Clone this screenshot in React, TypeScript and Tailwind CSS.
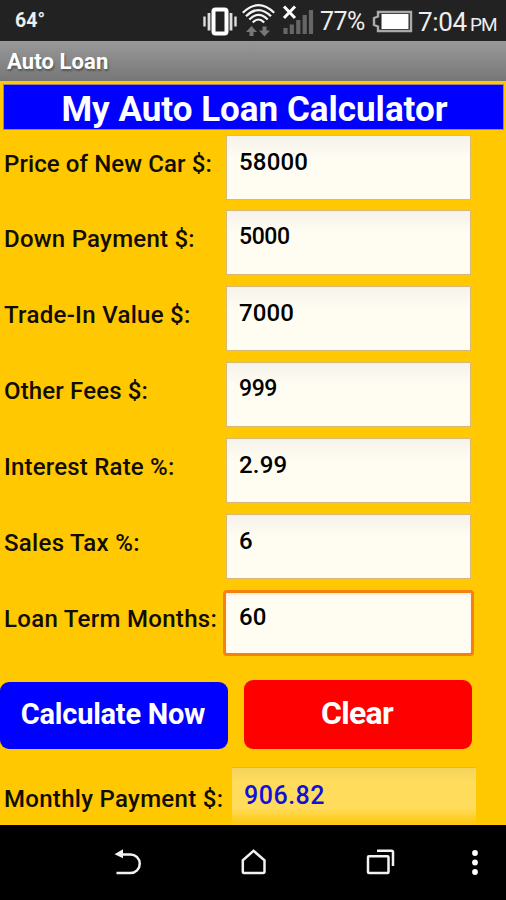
const fields = [
  { label: "Price of New Car $:", value: "58000", h: "h-[75px]", ls: "tracking-[0.1px]", vs: "pb-[12px] text-[24px] tracking-[0.2px]" },
  { label: "Down Payment $:", value: "5000", h: "h-[76px]", ls: "tracking-[0.25px]", vs: "pb-[12px] text-[23px] tracking-[-0.4px]" },
  { label: "Trade-In Value $:", value: "7000", h: "h-[76px]", ls: "tracking-[0.3px]", vs: "pb-[12px] text-[24px] tracking-[0.1px]" },
  { label: "Other Fees $:", value: "999", h: "h-[76px]", ls: "tracking-[0.15px]", vs: "pb-[12px] text-[23px] tracking-[-0.4px]" },
  { label: "Interest Rate %:", value: "2.99", h: "h-[76px]", ls: "tracking-[0.2px]", vs: "pb-[12px] text-[24px] tracking-[0.2px]" },
  { label: "Sales Tax %:", value: "6", h: "h-[76px]", ls: "tracking-[0.3px]", vs: "pb-[12px] text-[24px]" },
  { label: "Loan Term Months:", value: "60", h: "h-[76px]", ls: "tracking-[0.3px]", vs: "text-[24px]", focused: true },
];

function StatusBar() {
  return (
    <header className="flex h-[41px] w-full shrink-0 bg-[#222222] text-[#eeeeee]">
      <span className="w-[203px] pl-[15px] pt-[9px] text-[19.5px] leading-[24px] font-bold">64°</span>
      <svg className="h-[41px] w-[117px] shrink-0" viewBox="203 0 117 41" fill="none">
        <rect x="213.500" y="9.500" width="13" height="24" rx="2" stroke="#fff" strokeWidth="4" />
        <path d="M209 13v17.500M231 13v17.500" stroke="#ddd" strokeWidth="2.800" />
        <path d="M204.500 16.500v10M235.500 16.500v10" stroke="#ddd" strokeWidth="2.400" />
        <path d="M242.800 12.800Q258.500-2.500 274.200 12.800M246 16.300Q258.500 3.800 271 16.300M249.300 19.500Q258.500 10.200 267.700 19.500M252.800 22.500Q258.500 16.500 264.200 22.500" stroke="#f4f4f4" strokeWidth="2.200" />
        <path d="M251.500 26l5.500 6h-3.500v4h-4v-4H246zM264.500 36.500l-5.500-6h3.500v-4h4v4h3.500z" fill="#777" />
        <path d="M284 6.500l11 11.500M295 6.500L284 18" stroke="#fff" strokeWidth="3" />
        <path d="M285.500 28v6M291.800 24.500V34M298.300 20v14M304.700 15v19M311 10v24" stroke="#666" strokeWidth="4.200" />
      </svg>
      <span className="w-[51px] whitespace-nowrap pt-[8px] text-[25px] leading-[28px] tracking-[-0.5px]">77%</span>
      <svg className="h-[41px] w-[44px] shrink-0" viewBox="371 0 44 41" fill="none">
        <path d="M378 12H411V31H378V26.500L374 25V18L378 16.500Z" stroke="#aaa" strokeWidth="2.400" />
        <path d="M381.500 14H408.500V29H381.500Z" fill="#fff" />
      </svg>
      <span className="whitespace-nowrap pl-[3px] pt-[8px] text-[26px] leading-[28px] tracking-[-0.3px]">
        7:04<span className="ml-[3px] text-[19px] tracking-[-0.8px]">PM</span>
      </span>
    </header>
  );
}

function NavBar() {
  return (
    <nav className="h-[75px] w-full shrink-0 bg-black">
      <svg className="h-[75px] w-[506px]" viewBox="0 825 506 75" fill="none" stroke="#f2f2f2" strokeWidth="2.500">
        <path d="M121 854.500h9.500a9.200 9.200 0 0 1 0 18.500H116.500" />
        <path d="M114.500 854.300l8.500-5v9z" fill="#f2f2f2" stroke="none" />
        <path d="M253.500 850.800L264.500 860.300V871.500Q264.500 873 263 873H244Q242.800 873 242.800 871.500V860.300Z" />
        <rect x="368" y="856.300" width="20.500" height="16.700" rx="1" />
        <path d="M377 850.800H391.500Q393 850.800 393 852.300V866" />
        <g fill="#fff" stroke="none">
          <circle cx="475" cy="853" r="2.900" />
          <circle cx="475" cy="862.500" r="2.900" />
          <circle cx="475" cy="872" r="2.900" />
        </g>
      </svg>
    </nav>
  );
}

export default function App() {
  return (
    <div className="flex h-[900px] w-[506px] flex-col overflow-hidden bg-[#ffc800] font-['Roboto',sans-serif]">
      <StatusBar />
      <div className="h-[40px] shrink-0 bg-linear-to-b from-[#999999] to-[#777777] pl-[7px] pt-[8px] text-[22px] leading-[26px] font-bold tracking-[0.1px] text-white [text-shadow:1px_2px_2px_#555]">
        Auto Loan
      </div>
      <main className="flex h-[744px] shrink-0 flex-col overflow-hidden">
        <h1 className="ml-[3px] mr-[2px] mt-[3px] flex h-[46px] shrink-0 items-center justify-center border border-[#a08090] bg-[#0000ff] pl-[2px] pt-[5px] text-[35px] leading-[40px] font-bold text-white">
          My Auto Loan Calculator
        </h1>
        <div className="mt-[5px] flex flex-col">
          {fields.map((f) => (
            <label key={f.label} className={`flex ${f.h}`}>
              <span className={`w-[226px] shrink-0 whitespace-nowrap pl-[4px] pt-[15px] text-[24px] leading-[28px] font-[550] text-[#110d00] ${f.ls}`}>
                {f.label}
              </span>
              <input
                readOnly
                value={f.value}
                className={
                  f.focused
                    ? `-ml-[3px] h-[66px] w-[251px] rounded-[4px] border-[3px] border-[#f88010] bg-[#fffdf2] pb-[12px] pl-[13px] font-[550] text-black shadow-[inset_0_2px_3px_#eeece6] outline-none ${f.vs}`
                    : `h-[65px] w-[245px] border border-[#d8b978] bg-linear-to-b from-[#f5f3ea] to-[#fffdf2] to-35% pl-[12px] font-[550] text-black outline-none ${f.vs}`
                }
              />
            </label>
          ))}
        </div>
        <div className="mt-[14px] flex h-[69px] shrink-0 items-end gap-[16px]">
          <button className="h-[67px] w-[228px] rounded-[9px] bg-[#0000ff] pr-[2px] pb-[2px] text-[29px] font-bold tracking-[-0.25px] text-white">Calculate Now</button>
          <button className="h-[69px] w-[228px] rounded-[9px] bg-[#ff0000] pr-[2px] pb-[4px] text-[32px] font-bold tracking-[-0.7px] text-white">Clear</button>
        </div>
        <div className="mt-[18px] flex h-[58px]">
          <span className="w-[232px] shrink-0 whitespace-nowrap pl-[4px] pt-[18px] text-[24px] leading-[28px] font-[550] tracking-[0.3px] text-[#110d00]">
            Monthly Payment $:
          </span>
          <output className="h-[58px] w-[244px] border-t border-[#e5b530] bg-[linear-gradient(to_bottom,#f5d45d_0%,#ffdc5c_25%,#ffdc5c_70%,#ffca15_95%)] pl-[12px] pt-[14px] text-[25px] leading-[28px] font-[550] tracking-[0.5px] text-[#1010dd]">
            906.82
          </output>
        </div>
      </main>
      <NavBar />
    </div>
  );
}
